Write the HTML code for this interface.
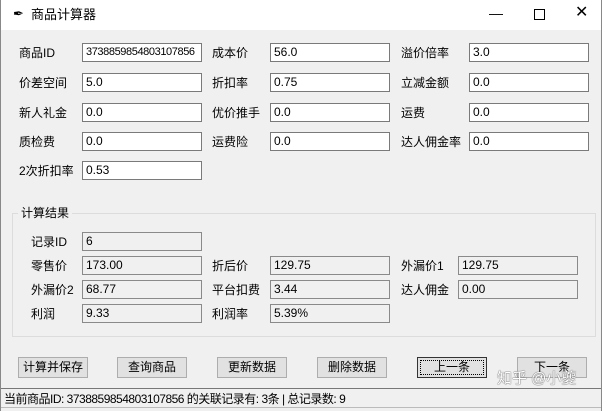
<!DOCTYPE html><html><head><meta charset="utf-8"><style>
body{margin:0;width:608px;height:411px;background:#fff;position:relative;overflow:hidden;font-family:"Liberation Sans","Noto Sans CJK SC",sans-serif;font-size:12px;color:#000}
.win{position:absolute;left:0;top:0;width:602px;height:411px;border-left:1px solid #888;border-right:1px solid #888;box-sizing:border-box;background:#f0f0f0}
.tb{position:absolute;left:0;top:0;width:100%;height:30px;background:#fff}
.a{position:absolute;white-space:nowrap;line-height:14px}
.e{position:absolute;height:19px;box-sizing:border-box;border:1px solid #7a7a7a;background:#fff;padding-left:3px;line-height:17px;white-space:nowrap;overflow:hidden}
.r{background:#f0f0f0;border-color:#8a8a8a}
.b{position:absolute;top:357px;height:21px;box-sizing:border-box;border:1px solid #adadad;background:#e1e1e1;text-align:center;line-height:19px}
</style></head><body><div class="win">
<div class="tb"><span class="a" style="left:12px;top:7px;font-size:13px">✒</span><span class="a" style="left:30px;top:8px;font-size:13px">商品计算器</span>
<span class="a" style="left:488px;top:6px;font-size:14px">—</span>
<div style="position:absolute;left:533px;top:9px;width:9px;height:9px;border:1px solid #000"></div>
<span class="a" style="left:574px;top:6px;font-size:16px">✕</span></div>

<span class="a" style="left:18px;top:46px">商品ID</span><div class="e" style="left:81px;top:43px;width:120px;font-size:11px;letter-spacing:-0.4px">3738859854803107856</div>
<span class="a" style="left:211px;top:46px">成本价</span><div class="e" style="left:269px;top:43px;width:120px">56.0</div>
<span class="a" style="left:400px;top:46px">溢价倍率</span><div class="e" style="left:468px;top:43px;width:120px">3.0</div>

<span class="a" style="left:18px;top:76px">价差空间</span><div class="e" style="left:81px;top:73px;width:120px">5.0</div>
<span class="a" style="left:211px;top:76px">折扣率</span><div class="e" style="left:269px;top:73px;width:120px">0.75</div>
<span class="a" style="left:400px;top:76px">立减金额</span><div class="e" style="left:468px;top:73px;width:120px">0.0</div>

<span class="a" style="left:18px;top:106px">新人礼金</span><div class="e" style="left:81px;top:103px;width:120px">0.0</div>
<span class="a" style="left:211px;top:106px">优价推手</span><div class="e" style="left:269px;top:103px;width:120px">0.0</div>
<span class="a" style="left:400px;top:106px">运费</span><div class="e" style="left:468px;top:103px;width:120px">0.0</div>

<span class="a" style="left:18px;top:135px">质检费</span><div class="e" style="left:81px;top:132px;width:120px">0.0</div>
<span class="a" style="left:211px;top:135px">运费险</span><div class="e" style="left:269px;top:132px;width:120px">0.0</div>
<span class="a" style="left:400px;top:135px">达人佣金率</span><div class="e" style="left:468px;top:132px;width:120px">0.0</div>

<span class="a" style="left:18px;top:164px">2次折扣率</span><div class="e" style="left:81px;top:161px;width:120px">0.53</div>

<div style="position:absolute;left:11px;top:213px;width:582px;height:122px;border:1px solid #dcdcdc"></div>
<span class="a" style="left:17px;top:206px;background:#f0f0f0;padding:0 3px">计算结果</span>

<span class="a" style="left:30px;top:235px">记录ID</span><div class="e r" style="left:81px;top:232px;width:120px">6</div>
<span class="a" style="left:30px;top:259px">零售价</span><div class="e r" style="left:81px;top:256px;width:120px">173.00</div>
<span class="a" style="left:211px;top:259px">折后价</span><div class="e r" style="left:269px;top:256px;width:120px">129.75</div>
<span class="a" style="left:400px;top:259px">外漏价1</span><div class="e r" style="left:457px;top:256px;width:120px">129.75</div>
<span class="a" style="left:30px;top:283px">外漏价2</span><div class="e r" style="left:81px;top:280px;width:120px">68.77</div>
<span class="a" style="left:211px;top:283px">平台扣费</span><div class="e r" style="left:269px;top:280px;width:120px">3.44</div>
<span class="a" style="left:400px;top:283px">达人佣金</span><div class="e r" style="left:457px;top:280px;width:120px">0.00</div>
<span class="a" style="left:30px;top:307px">利润</span><div class="e r" style="left:81px;top:304px;width:120px">9.33</div>
<span class="a" style="left:211px;top:307px">利润率</span><div class="e r" style="left:269px;top:304px;width:120px">5.39%</div>

<div class="b" style="left:17px;width:70px">计算并保存</div>
<div class="b" style="left:116px;width:70px">查询商品</div>
<div class="b" style="left:216px;width:70px">更新数据</div>
<div class="b" style="left:316px;width:70px">删除数据</div>
<div class="b" style="left:416px;width:70px;border:1px solid #333;outline:1px dotted #000;outline-offset:-4px">上一条</div>
<div class="b" style="left:516px;width:70px">下一条</div>
<span class="a" style="left:496px;top:372px;color:#fff;font-size:15px;text-shadow:0 0 1px #555,0 0 1px #555">知乎 @小夔</span>

<div style="position:absolute;left:0;top:388px;width:100%;height:20px;border-top:1px solid #777;border-bottom:1px solid #bbb;box-sizing:border-box"></div>
<span class="a" style="left:3px;top:392px;letter-spacing:-0.5px">当前商品ID: 3738859854803107856 的关联记录有: 3条 | 总记录数: 9</span>
</div></body></html>
